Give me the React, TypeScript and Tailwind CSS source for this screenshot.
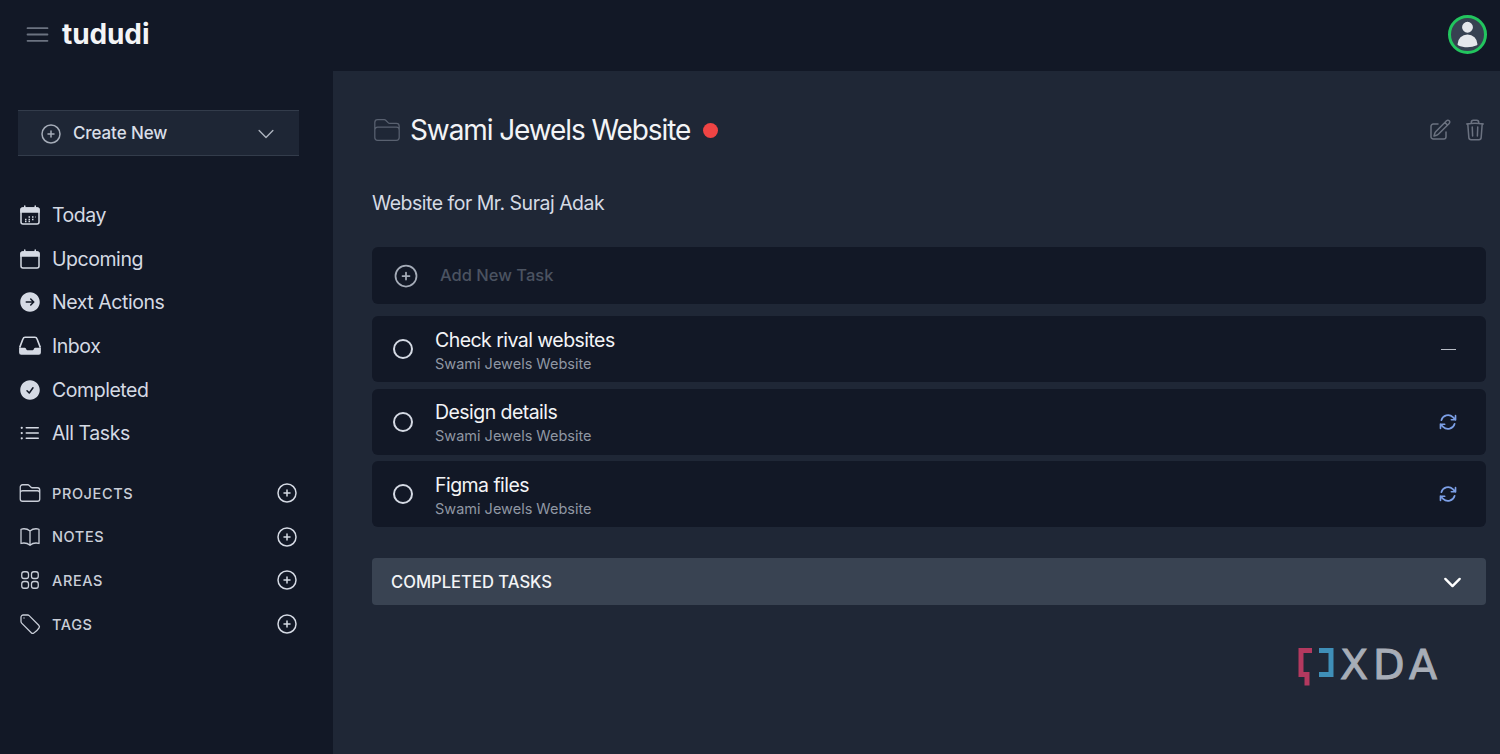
import {
  HiOutlineBars3,
  HiOutlineBookOpen,
  HiOutlineChevronDown,
  HiOutlineFolder,
  HiOutlineListBullet,
  HiOutlinePencilSquare,
  HiOutlinePlusCircle,
  HiOutlineSquares2X2,
  HiOutlineTag,
  HiOutlineTrash,
  HiOutlineArrowPath,
  HiArrowRightCircle,
  HiCheckCircle,
  HiUser,
} from 'react-icons/hi2'

function TodayIcon({ className }: { className?: string }) {
  return (
    <svg viewBox="0 0 24 24" className={className} fill="none" stroke="currentColor" strokeWidth="1.5">
      <path d="M6.75 3v2.5M17.25 3v2.5" strokeLinecap="round" />
      <path d="M3 7a2 2 0 0 1 2-2h14a2 2 0 0 1 2 2v2H3z" fill="currentColor" />
      <rect x="3" y="5" width="18" height="16" rx="2" />
      <path d="M7 16.5h1.5M10.5 16.5H12M14 16.5h1.5M10.5 14H12M14 14h1.5M17 14h.5M7 18.5h1.5M10.5 18.5H12" strokeWidth="1.3" />
    </svg>
  )
}

function UpcomingIcon({ className }: { className?: string }) {
  return (
    <svg viewBox="0 0 24 24" className={className} fill="none" stroke="currentColor" strokeWidth="1.5">
      <path d="M6.75 3v2.5M17.25 3v2.5" strokeLinecap="round" />
      <path d="M3 7a2 2 0 0 1 2-2h14a2 2 0 0 1 2 2v2H3z" fill="currentColor" />
      <rect x="3" y="5" width="18" height="16" rx="2" />
    </svg>
  )
}

function InboxIcon({ className }: { className?: string }) {
  return (
    <svg viewBox="1 1 22 22" className={className} fill="none" stroke="currentColor" strokeWidth="1.5">
      <path d="M2.5 13.5 5.6 5.4A2 2 0 0 1 7.5 4h9a2 2 0 0 1 1.9 1.4l3.1 8.1" strokeLinejoin="round" />
      <path
        d="M2 13.5h5.2a1 1 0 0 1 .9.6l.6 1.2a1 1 0 0 0 .9.6h4.8a1 1 0 0 0 .9-.6l.6-1.2a1 1 0 0 1 .9-.6H22V18a2 2 0 0 1-2 2H4a2 2 0 0 1-2-2z"
        fill="currentColor"
        stroke="none"
      />
    </svg>
  )
}

const navItems = [
  { label: 'Today', icon: TodayIcon },
  { label: 'Upcoming', icon: UpcomingIcon },
  { label: 'Next Actions', icon: HiArrowRightCircle },
  { label: 'Inbox', icon: InboxIcon },
  { label: 'Completed', icon: HiCheckCircle },
  { label: 'All Tasks', icon: HiOutlineListBullet },
]

const sections = [
  { label: 'PROJECTS', icon: HiOutlineFolder },
  { label: 'NOTES', icon: HiOutlineBookOpen },
  { label: 'AREAS', icon: HiOutlineSquares2X2 },
  { label: 'TAGS', icon: HiOutlineTag },
]

const tasks = [
  { name: 'Check rival websites', status: 'none' },
  { name: 'Design details', status: 'progress' },
  { name: 'Figma files', status: 'progress' },
]

function Sidebar() {
  return (
    <aside className="w-[333px] shrink-0 bg-[#121826] pt-[39px] pl-[18px] pr-[34px]">
      <button className="flex h-[46px] w-[281px] items-center border-y border-[#333c4b] bg-[#1e2635] pl-[21px] pr-[22px] pt-[1px] text-[#d9dee7]">
        <HiOutlinePlusCircle className="h-6 w-6 text-[#a5acb8]" />
        <span className="ml-[10px] text-[17px] font-medium tracking-[-0.1px]">Create New</span>
        <HiOutlineChevronDown className="ml-auto h-[22px] w-[22px] text-[#aeb4bf]" />
      </button>

      <nav className="mt-[37.5px] flex flex-col">
        {navItems.map(({ label, icon: Icon }) => (
          <div key={label} className="flex h-[43.6px] items-center text-[#d5dae4]">
            <Icon className="h-6 w-6 shrink-0" />
            <span className="ml-[10px] pt-[1px] text-[19.5px] tracking-[-0.45px]">{label}</span>
          </div>
        ))}
      </nav>

      <div className="mt-[16px] flex flex-col">
        {sections.map(({ label, icon: Icon }) => (
          <div key={label} className="flex h-[43.7px] items-center text-[#c9ced8]">
            <Icon className="h-6 w-6 shrink-0 stroke-[1.3]" />
            <span className="ml-[10px] pt-[1px] text-[14.5px] font-medium tracking-[0.6px]">{label}</span>
            <HiOutlinePlusCircle className="ml-auto h-6 w-6 text-[#d5dae4]" />
          </div>
        ))}
      </div>
    </aside>
  )
}

function TaskRow({ name, status }: { name: string; status: string }) {
  return (
    <div className="flex h-[66px] items-center rounded-md bg-[#121826] pl-[21px] pr-[28px]">
      <div className="h-5 w-5 shrink-0 rounded-full border-2 border-[#d5dae4]" />
      <div className="ml-[22px] pt-[2px]">
        <div className="text-[19.5px] leading-[26px] tracking-[-0.55px] text-[#f3f4f6]">{name}</div>
        <div className="mt-[1px] text-[14.5px] leading-[20px] text-[#9097a3]">Swami Jewels Website</div>
      </div>
      <div className="ml-auto flex w-5 justify-center">
        {status === 'progress' ? (
          <HiOutlineArrowPath className="h-5 w-5 stroke-2 text-[#7c9fe6]" />
        ) : (
          <div className="h-px w-[15px] bg-[#b8bdc6]" />
        )}
      </div>
    </div>
  )
}

function XdaMark() {
  return (
    <div className="absolute left-[1298px] top-[646px] flex items-start">
      <svg viewBox="0 0 36 44" className="h-[44px] w-[36px]" fill="none" strokeWidth="5">
        <path d="M14 4.5H3v24h6v11" stroke="#b3395f" />
        <path d="M21 4.5h12v24H21" stroke="#3f8fb8" />
      </svg>
      <span className="ml-[6px] font-['DejaVu_Sans',sans-serif] text-[41px] leading-[38px] tracking-[5px] text-[#a7adb7] [-webkit-text-stroke:1px_#a7adb7]">
        XDA
      </span>
    </div>
  )
}

export default function App() {
  return (
    <div className="relative flex h-[754px] w-[1500px] flex-col overflow-hidden bg-[#121826] font-['Inter',sans-serif]">
      <header className="flex h-[71px] shrink-0 items-center pb-[3px] pl-[23px] pr-[13px]">
        <HiOutlineBars3 className="h-[29px] w-[29px] text-[#6b7280]" />
        <span className="ml-[10px] text-[28px] font-bold leading-none tracking-[-0.1px] text-[#f3f4f6]">tududi</span>
        <div className="ml-auto flex h-[39px] w-[39px] items-center justify-center overflow-hidden rounded-full border-[3px] border-[#22c55e] bg-[#374151]">
          <HiUser className="h-[29px] w-[29px] text-[#e5e7eb]" />
        </div>
      </header>

      <div className="flex min-h-0 flex-1">
        <Sidebar />
        <main className="flex-1 bg-[#1f2736] pl-[39px] pr-[14px] pt-[39px]">
          <div className="-mr-px flex h-[40px] items-center">
            <HiOutlineFolder className="h-[30px] w-[30px] stroke-1 text-[#596170]" />
            <h1 className="ml-[8px] text-[28px] font-normal tracking-[-1.1px] text-[#f3f4f6]">Swami Jewels Website</h1>
            <div className="ml-[13px] h-[15px] w-[15px] rounded-full bg-[#ef4444]" />
            <HiOutlinePencilSquare className="ml-auto h-6 w-6 text-[#6b7280]" />
            <HiOutlineTrash className="ml-[11px] h-6 w-6 text-[#6b7280]" />
          </div>

          <p className="mt-[39px] text-[19.5px] leading-[28px] tracking-[-0.5px] text-[#d5dae4]">Website for Mr. Suraj Adak</p>

          <div className="mt-[30px] flex h-[57px] items-center rounded-md bg-[#121826] pl-5">
            <HiOutlinePlusCircle className="h-7 w-7 text-[#a5acb8]" />
            <span className="ml-[20px] text-[16.5px] font-medium text-[#4b5361]">Add New Task</span>
          </div>

          <div className="mt-[12px] flex flex-col gap-[6.5px]">
            {tasks.map(t => (
              <TaskRow key={t.name} name={t.name} status={t.status} />
            ))}
          </div>

          <div className="mt-[31px] flex h-[47px] items-center rounded-sm bg-[#394352] pl-[19px] pr-[22px] pt-[1px]">
            <span className="text-[16.6px] font-medium text-[#f3f4f6]">COMPLETED TASKS</span>
            <HiOutlineChevronDown className="ml-auto h-[23px] w-[23px] stroke-[2.5] text-white" />
          </div>
        </main>
      </div>

      <XdaMark />
    </div>
  )
}
